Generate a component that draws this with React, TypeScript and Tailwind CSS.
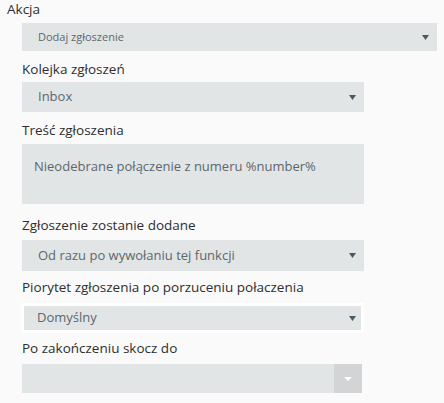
const font = { fontFamily: '"Open Sans", "Noto Sans", sans-serif' };

function Caret() {
  return (
    <svg width="7" height="5" viewBox="0 0 7 5" className="shrink-0">
      <path d="M0 0H7L3.5 5Z" fill="#4b5a62" />
    </svg>
  );
}

function Label({ children, className = "" }: { children: React.ReactNode; className?: string }) {
  return (
    <div className={`h-[18px] text-[13.5px] font-medium leading-[18px] text-[#2e2e2e] ${className}`}>{children}</div>
  );
}

function Select({ value, className = "", small = false }: { value: string; className?: string; small?: boolean }) {
  return (
    <div
      className={`flex items-center justify-between bg-[#e2e5e6] pl-4 pr-2 text-[#5c676d] ${small ? "text-[11px]" : "text-[13px]"} ${className}`}
    >
      <span>{value}</span>
      <Caret />
    </div>
  );
}

export default function App() {
  return (
    <div style={font} className="flex h-[403px] w-[444px] flex-col bg-[#fafafa]">
      <Label className="ml-[7px]">Akcja</Label>
      <Select value="Dodaj zgłoszenie" small className="ml-[22px] mt-[5px] h-[28px] w-[415px]" />

      <div className="ml-[22px] flex w-[342px] flex-col">
        <Label className="mt-[9px]">Kolejka zgłoszeń</Label>
        <Select value="Inbox" className="mt-[4px] h-[30px]" />

        <Label className="mt-[9px]">Treść zgłoszenia</Label>
        <div className="mt-[5px] h-[60px] bg-[#e2e5e6] px-3 pt-[13px] text-[13px] leading-[18px] text-[#5c676d]">
          Nieodebrane połączenie z numeru %number%
        </div>

        <Label className="mt-[12px]">Zgłoszenie zostanie dodane</Label>
        <Select value="Od razu po wywołaniu tej funkcji" className="mt-[6px] h-[31px]" />

        <Label className="mt-[7px]">Piorytet zgłoszenia po porzuceniu połaczenia</Label>
        <div className="-ml-px mt-[7px] border-[3px] border-white">
          <Select value="Domyślny" className="h-[24px] pl-[13px] pr-[5px]" />
        </div>

        <Label className="mt-[6px]">Po zakończeniu skocz do</Label>
        <div className="mt-[7px] flex h-[29px] w-[340px] bg-[#e2e5e6]">
          <div className="flex-1" />
          <div className="flex w-[28px] items-center justify-center bg-[#d3d4d5]">
            <svg width="8" height="4" viewBox="0 0 8 4">
              <path d="M0 0H8L4 4Z" fill="#ffffff" />
            </svg>
          </div>
        </div>
      </div>
    </div>
  );
}
